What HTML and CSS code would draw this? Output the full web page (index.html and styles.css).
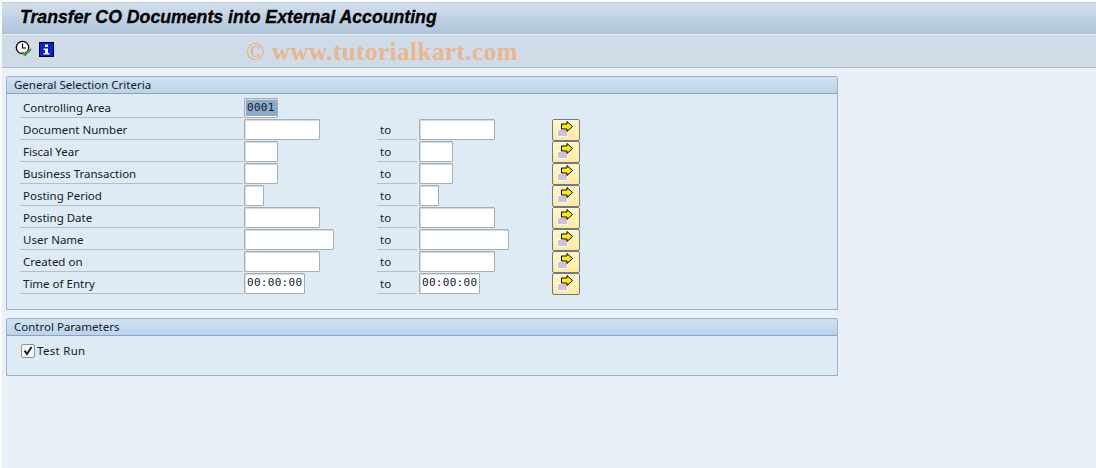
FILE: index.html
```html
<!DOCTYPE html>
<html>
<head>
<meta charset="utf-8">
<title>Transfer CO Documents into External Accounting</title>
<link rel="stylesheet" href="styles.css">
</head>
<body>
<div class="page">
  <header class="titlebar"><h1>Transfer CO Documents into External Accounting</h1></header>
  <div class="toolbar">
    <svg class="icon clock" width="18" height="18" viewBox="0 0 18 18">
      <circle cx="7.500" cy="7.500" r="6.200" fill="#fff" stroke="#000" stroke-width="1.300"/>
      <path d="M7.500 3.500V8H11" fill="none" stroke="#000" stroke-width="1.200"/>
      <path d="M7 12l3 3 6-6" fill="none" stroke="#4c9a3f" stroke-width="2.200"/>
    </svg>
    <svg class="icon info" width="15" height="15" viewBox="0 0 15 15">
      <rect x="0.500" y="0.500" width="14" height="14" fill="#0a1fe0" stroke="#000"/>
      <rect x="6" y="2.500" width="3" height="2.500" fill="#fff"/>
      <path d="M4.500 6.500H9V11H10.500V12.500H4.500V11H6V8H4.500Z" fill="#fff"/>
    </svg>
    <span class="watermark">© www.tutorialkart.com</span>
  </div>
  <main class="content">
    <section class="panel selection">
      <h2 class="panel-title">General Selection Criteria</h2>
      <div class="rows">
        <div class="row">
          <label class="label">Controlling Area</label>
          <span class="field w4 highlighted"><span class="sel">0001</span></span>
        </div>
        <div class="row">
          <label class="label">Document Number</label>
          <span class="low"><span class="field w10"></span></span><span class="to">to</span>
          <span class="high"><span class="field w10"></span></span>
          <button class="more"><svg width="20" height="18" viewBox="0 0 20 18"><use href="#arrow"/></svg></button>
        </div>
        <div class="row">
          <label class="label">Fiscal Year</label>
          <span class="low"><span class="field w4"></span></span><span class="to">to</span>
          <span class="high"><span class="field w4"></span></span>
          <button class="more"><svg width="20" height="18" viewBox="0 0 20 18"><use href="#arrow"/></svg></button>
        </div>
        <div class="row">
          <label class="label">Business Transaction</label>
          <span class="low"><span class="field w4"></span></span><span class="to">to</span>
          <span class="high"><span class="field w4"></span></span>
          <button class="more"><svg width="20" height="18" viewBox="0 0 20 18"><use href="#arrow"/></svg></button>
        </div>
        <div class="row">
          <label class="label">Posting Period</label>
          <span class="low"><span class="field w2"></span></span><span class="to">to</span>
          <span class="high"><span class="field w2"></span></span>
          <button class="more"><svg width="20" height="18" viewBox="0 0 20 18"><use href="#arrow"/></svg></button>
        </div>
        <div class="row">
          <label class="label">Posting Date</label>
          <span class="low"><span class="field w10"></span></span><span class="to">to</span>
          <span class="high"><span class="field w10"></span></span>
          <button class="more"><svg width="20" height="18" viewBox="0 0 20 18"><use href="#arrow"/></svg></button>
        </div>
        <div class="row">
          <label class="label">User Name</label>
          <span class="low"><span class="field w12"></span></span><span class="to">to</span>
          <span class="high"><span class="field w12"></span></span>
          <button class="more"><svg width="20" height="18" viewBox="0 0 20 18"><use href="#arrow"/></svg></button>
        </div>
        <div class="row">
          <label class="label">Created on</label>
          <span class="low"><span class="field w10"></span></span><span class="to">to</span>
          <span class="high"><span class="field w10"></span></span>
          <button class="more"><svg width="20" height="18" viewBox="0 0 20 18"><use href="#arrow"/></svg></button>
        </div>
        <div class="row">
          <label class="label">Time of Entry</label>
          <span class="low"><span class="field w8">00:00:00</span></span><span class="to">to</span>
          <span class="high"><span class="field w8">00:00:00</span></span>
          <button class="more"><svg width="20" height="18" viewBox="0 0 20 18"><use href="#arrow"/></svg></button>
        </div>
      </div>
    </section>
    <section class="panel control">
      <h2 class="panel-title">Control Parameters</h2>
      <div class="check-row">
        <span class="checkbox">
          <svg width="12" height="12" viewBox="0 0 12 12"><path d="M2.500 5.500l2.500 3.500L9.500 2" fill="none" stroke="#222" stroke-width="2"/></svg>
        </span>
        <span class="check-label">Test Run</span>
      </div>
    </section>
  </main>
</div>
<svg class="defs" width="0" height="0">
  <defs>
    <g id="arrow">
      <rect x="1.500" y="8.500" width="10" height="7" fill="#d0bfe0" stroke="#fff"/>
      <path d="M5.500 3H11V0.500L16.500 5.500L11 10.500V8H5.500Z" fill="#ffee00" stroke="#000"/>
    </g>
  </defs>
</svg>
</body>
</html>
```
FILE: styles.css
```css
* { box-sizing: border-box; }
html, body { margin: 0; padding: 0; height: 100%; }
body {
  background: #f8fafc;
  font-family: "Noto Sans", "DejaVu Sans", sans-serif;
  font-size: 11.5px;
  color: #12202c;
  overflow: hidden;
}
.page {
  width: 1094px;
  height: 466px;
  margin: 2px 0 0 2px;
  background: #e9f0f8;
}
.titlebar {
  height: 32px;
  background: linear-gradient(#d3dfeb, #aec4da);
  border-top: 1px solid #c3ccd6;
  display: flex;
  align-items: center;
  padding: 0 0 3px 18px;
}
.titlebar h1 {
  margin: 0;
  font-family: "Liberation Sans", Arial, sans-serif;
  font-size: 17.7px;
  font-weight: bold;
  font-style: italic;
  color: #000;
  white-space: nowrap;
  -webkit-text-stroke: 0.3px #000;
}
.toolbar {
  height: 34px;
  background: #cfdce8;
  border-top: 1px solid #e4ecf3;
  border-bottom: 1px solid #aeb9c5;
  display: flex;
  align-items: center;
  padding: 0 0 4px 13px;
}
.icon { flex: none; }
.info { margin-left: 6px; }
.watermark {
  margin-left: 192px;
  font-family: "Liberation Serif", "Times New Roman", serif;
  font-size: 25px;
  font-weight: bold;
  color: #e8b78c;
  white-space: nowrap;
  letter-spacing: 0.5px;
  position: relative;
  top: 3px;
}
.content {
  padding: 8px 0 0 4px;
  width: 836px;
}
.panel {
  background: #deeaf4;
  border: 1px solid #98b3cf;
  border-radius: 2px 2px 0 0;
  width: 832px;
}
.selection { height: 234px; }
.control { height: 58px; margin-top: 8px; }
.panel-title {
  margin: 0;
  height: 17px;
  padding-left: 7px;
  background: linear-gradient(#d2e1f0, #bdd3ea);
  border-bottom: 1px solid #8ba3bf;
  font-size: 11.5px;
  font-weight: normal;
  line-height: 15px;
  color: #12202c;
  white-space: nowrap;
}
.rows { padding: 2px 0 0 13px; }
.row {
  display: flex;
  height: 22px;
  align-items: flex-end;
}
.label {
  width: 223px;
  height: 21px;
  flex: none;
  padding: 3px 0 0 3px;
  border-bottom: 1px solid #b4bec8;
  white-space: nowrap;
  line-height: 16px;
  margin-right: 1px;
}
.low { width: 133px; flex: none; display: flex; }
.to {
  width: 40px;
  height: 21px;
  flex: none;
  padding: 3px 0 0 3px;
  line-height: 16px;
  border-bottom: 1px solid #b4bec8;
  margin-right: 2px;
}
.high { width: 133px; flex: none; display: flex; }
.field {
  display: block;
  height: 21px;
  background: #fff;
  border: 1px solid #a6aeb6;
  box-shadow: inset 1px 1px 0 #d6dbe0;
  border-radius: 1px;
  font-family: "DejaVu Sans Mono", "Liberation Mono", monospace;
  font-size: 11px;
  letter-spacing: 0.3px;
  line-height: 18px;
  padding-left: 2px;
  flex: none;
}
.w2 { width: 20px; }
.w4 { width: 34px; }
.w8 { width: 61px; }
.w10 { width: 76px; }
.w12 { width: 90px; }
.highlighted { height: 20px; padding: 1px 0 0 1px; }
.sel {
  display: block;
  background: #8cabc9;
  height: 16px;
  padding-left: 1px;
  line-height: 16px;
  color: #10202e;
}
.more {
  width: 28px;
  height: 22px;
  flex: none;
  padding: 0 0 0 3px;
  background: linear-gradient(#fff6cf, #ffe99a);
  border: 1px solid #6f7a85;
  border-radius: 2px;
  display: flex;
  align-items: center;
  justify-content: flex-start;
  position: relative;
  top: 1px;
}
.more svg { display: block; }
.check-row {
  display: flex;
  align-items: center;
  padding: 7px 0 0 14px;
}
.checkbox {
  width: 14px;
  height: 14px;
  background: #f4f6f8;
  border: 1px solid #8b949d;
  border-radius: 2px;
  display: flex;
  flex: none;
}
.check-label { margin-left: 2px; line-height: 15px; letter-spacing: 0.3px; }
.defs { position: absolute; }
```
